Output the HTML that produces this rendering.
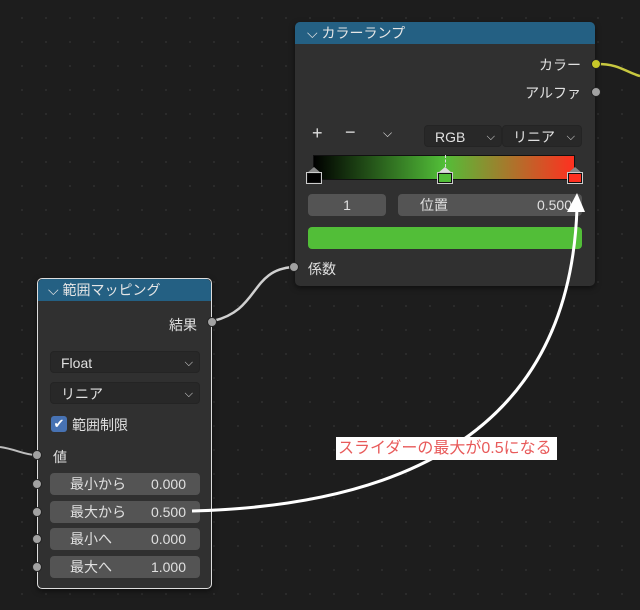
<!DOCTYPE html><html><head><meta charset="utf-8"><style>
*{margin:0;padding:0;box-sizing:border-box}
body{width:640px;height:610px;overflow:hidden;background:#1d1d1d;background-image:radial-gradient(#2c2c2c 1px,transparent 1.2px);background-size:24px 24px;background-position:10px 6px;font-family:"Liberation Sans","Noto Sans CJK JP",sans-serif;color:#e0e0e0;font-size:14px;position:relative}
.a{position:absolute}
.node{background:#303030;border-radius:5px;box-shadow:0 2px 6px rgba(0,0,0,.5)}
.hdr{background:#246083;height:22px;border-radius:5px 5px 0 0;padding-left:12px;line-height:22px;font-size:14px;color:#e6e6e6}
.fld{background:#545454;border-radius:4px;height:22px;line-height:22px;color:#e0e0e0}
.dd{background:#282828;border-radius:4px;height:22px;line-height:22px;padding-left:10px;border:1px solid #242424}
.sock{width:10px;height:10px;border-radius:50%;background:#a1a1a1;border:1px solid #222}
.chev{position:absolute;right:6px;top:0;font-size:11px}
.mk{position:absolute;width:14px;height:16px}
.mk i{position:absolute;left:0;top:0;width:0;height:0;border-left:7px solid transparent;border-right:7px solid transparent;border-bottom:6px solid #888}
.mk b{position:absolute;left:0;top:6px;width:14px;height:10px;border:1px solid #111;outline:1px solid #ccc}
</style></head><body>
<svg class="a" style="left:0;top:0" width="640" height="610">
<path d="M0,447 C15,449 25,455 36,455" stroke="#bdbdbd" stroke-width="2" fill="none"/>
<path d="M213,321 C260,310 250,270 293,267" stroke="#d0d0d0" stroke-width="2.5" fill="none"/>
<path d="M597,64 C620,64 625,72 640,76" stroke="#c8c840" stroke-width="2.5" fill="none"/>
</svg>
<div class="a node" style="left:295px;top:22px;width:300px;height:264px">
<div class="hdr">⌵ カラーランプ</div>
<div class="a" style="right:14px;top:33px">カラー</div>
<div class="a" style="right:14px;top:61px">アルファ</div>
<div class="a" style="left:17px;top:101px;font-size:18px">+</div>
<div class="a" style="left:50px;top:100px;font-size:18px">−</div>
<div class="a" style="left:88px;top:104px;font-size:12px">⌵</div>
<div class="a dd" style="left:129px;top:103px;width:78px;padding-left:10px">RGB<span class="chev">⌵</span></div>
<div class="a dd" style="left:207px;top:103px;width:80px;padding-left:10px">リニア<span class="chev">⌵</span></div>
<div class="a" style="left:18px;top:133px;width:262px;height:25px;background:linear-gradient(90deg,#000,#52be38 50%,#ff3020);border:1px solid #111"></div>
<div class="a" style="left:150px;top:133px;height:12px;border-left:1px dashed #ddd"></div>
<div class="mk" style="left:12px;top:145px"><i></i><b style="background:#000"></b></div>
<div class="mk" style="left:143px;top:145px"><i style="border-bottom-color:#ddd"></i><b style="background:#52be38"></b></div>
<div class="mk" style="left:273px;top:145px"><i></i><b style="background:#ff3020"></b></div>
<div class="a fld" style="left:13px;top:172px;width:78px;text-align:center">1</div>
<div class="a fld" style="left:103px;top:172px;width:184px;padding:0 10px 0 22px">位置<span style="float:right">0.500</span></div>
<div class="a" style="left:13px;top:205px;width:274px;height:22px;background:#52be38;border-radius:4px"></div>
<div class="a" style="left:13px;top:237px">係数</div>
<div class="a sock" style="left:296px;top:37px;background:#c7c729"></div>
<div class="a sock" style="left:296px;top:65px"></div>
<div class="a sock" style="left:-6px;top:240px"></div>
</div>
<div class="a node" style="left:37px;top:278px;width:175px;height:311px;border:1px solid #ddd">
<div class="hdr" style="padding-left:10px">⌵ 範囲マッピング</div>
<div class="a" style="right:14px;top:36px">結果</div>
<div class="a dd" style="left:12px;top:72px;width:150px">Float<span class="chev">⌵</span></div>
<div class="a dd" style="left:12px;top:103px;width:150px">リニア<span class="chev">⌵</span></div>
<div class="a" style="left:13px;top:137px;width:16px;height:16px;background:#4772b3;border-radius:3px;color:#fff;font-size:13px;line-height:16px;text-align:center">✔</div>
<div class="a" style="left:34px;top:136px">範囲制限</div>
<div class="a" style="left:15px;top:168px">値</div>
<div class="a fld" style="left:12px;top:194px;width:150px;padding:0 14px 0 20px">最小から<span style="float:right">0.000</span></div>
<div class="a fld" style="left:12px;top:222px;width:150px;padding:0 14px 0 20px">最大から<span style="float:right">0.500</span></div>
<div class="a fld" style="left:12px;top:249px;width:150px;padding:0 14px 0 20px">最小へ<span style="float:right">0.000</span></div>
<div class="a fld" style="left:12px;top:277px;width:150px;padding:0 14px 0 20px">最大へ<span style="float:right">1.000</span></div>
<div class="a sock" style="left:169px;top:38px"></div>
<div class="a sock" style="left:-6px;top:171px"></div>
<div class="a sock" style="left:-6px;top:200px"></div>
<div class="a sock" style="left:-6px;top:228px"></div>
<div class="a sock" style="left:-6px;top:255px"></div>
<div class="a sock" style="left:-6px;top:283px"></div>
</div>
<svg class="a" style="left:0;top:0" width="640" height="610">
<path d="M192,511 C420,505 570,420 577,208" stroke="#fff" stroke-width="3" fill="none"/>
<polygon points="567,212 577,193 585,212" fill="#fff"/>
</svg>
<div class="a" style="left:336px;top:437px;width:221px;height:23px;background:#fff;color:#e85a5a;font-size:16px;line-height:23px;padding-left:2px;white-space:nowrap;overflow:hidden">スライダーの最大が0.5になる</div>
</body></html>
